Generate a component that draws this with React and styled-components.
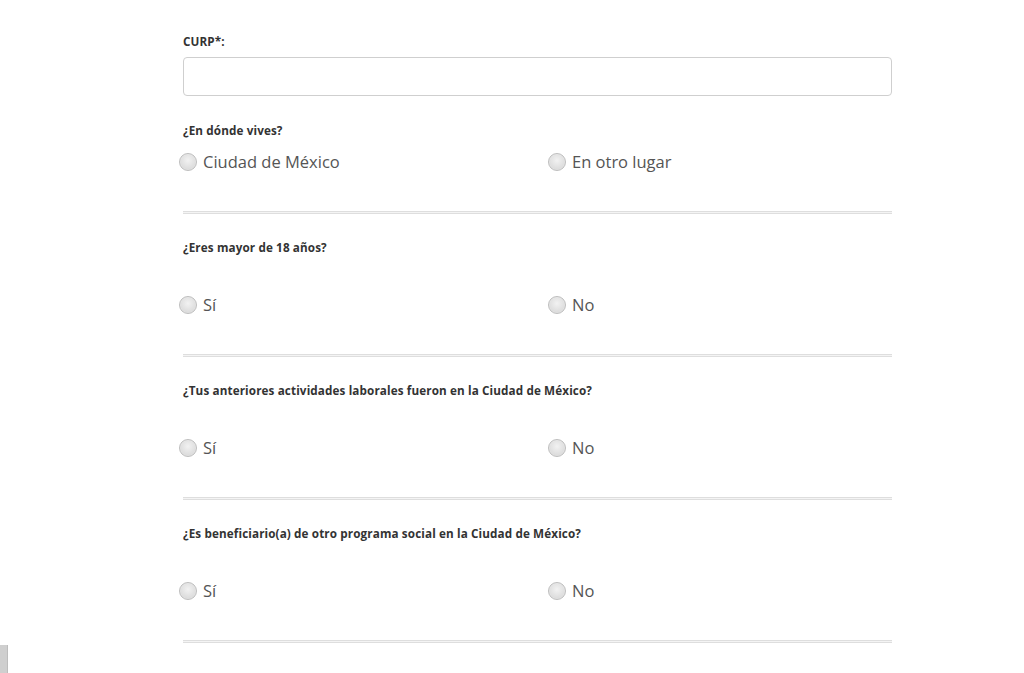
import React from 'react';
import styled, { createGlobalStyle } from 'styled-components';

const GlobalStyle = createGlobalStyle`
    html, body {
        margin: 0;
        padding: 0;
        background: #fff;
    }
    body {
        font-family: 'Open Sans', 'Liberation Sans', sans-serif;
        color: #333;
    }
`;

const Page = styled.div`
    width: 1024px;
    min-height: 673px;
    overflow: hidden;
`;

const Form = styled.form`
    width: 709px;
    margin: 0 0 0 183px;
    padding-top: 34px;
`;

const Label = styled.div`
    font-size: 11.7px;
    font-weight: 700;
    line-height: 14px;
    letter-spacing: 0.12px;
    color: #333;
`;

const TextInput = styled.input`
    display: block;
    box-sizing: border-box;
    width: 100%;
    height: 39px;
    margin: 9px 0 0;
    border: 1px solid #cfcfcf;
    border-radius: 4px;
    background: #fff;
    font: inherit;
    outline: none;
`;

const Section = styled.div`
    padding-top: ${({ first }) => (first ? '27px' : '26px')};
`;

const Options = styled.div`
    display: grid;
    grid-template-columns: 369px 1fr;
    margin: ${({ first }) => (first ? '14px' : '40px')} 0 0 -4px;
`;

const Option = styled.label`
    display: flex;
    align-items: center;
    gap: 6px;
    font-size: 16.5px;
    line-height: 22px;
    color: #555;
    cursor: pointer;
`;

const Radio = styled.span`
    width: 18px;
    height: 18px;
    box-sizing: border-box;
    border-radius: 50%;
    border: 1px solid #bdbdbd;
    background: radial-gradient(circle at 50% 40%, #f2f2f2 0%, #dcdcdc 70%, #cfcfcf 100%);
    box-shadow: inset 0 0 1px #fff;
    flex-shrink: 0;
`;

const Divider = styled.div`
    height: 1px;
    margin-top: 38px;
    border-top: 1px solid #dedede;
    border-bottom: 1px solid #dedede;
    background: #f4f4f4;
`;

const SideTab = styled.div`
    position: fixed;
    left: 0;
    bottom: 0;
    width: 7px;
    height: 28px;
    background: #cfcfcf;
    border-right: 1px solid #bdbdbd;
`;

const questions = [
    { text: '¿En dónde vives?', options: ['Ciudad de México', 'En otro lugar'] },
    { text: '¿Eres mayor de 18 años?', options: ['Sí', 'No'] },
    { text: '¿Tus anteriores actividades laborales fueron en la Ciudad de México?', options: ['Sí', 'No'] },
    { text: '¿Es beneficiario(a) de otro programa social en la Ciudad de México?', options: ['Sí', 'No'] },
];

function App() {
    return (
        <Page>
            <GlobalStyle />
            <Form>
                <Label>CURP*:</Label>
                <TextInput type="text" />
                {questions.map((q, i) => (
                    <Section key={q.text} first={i === 0}>
                        <Label>{q.text}</Label>
                        <Options first={i === 0}>
                            {q.options.map((opt) => (
                                <Option key={opt}>
                                    <Radio />
                                    {opt}
                                </Option>
                            ))}
                        </Options>
                        <Divider />
                    </Section>
                ))}
            </Form>
            <SideTab />
        </Page>
    );
}

export default App;
